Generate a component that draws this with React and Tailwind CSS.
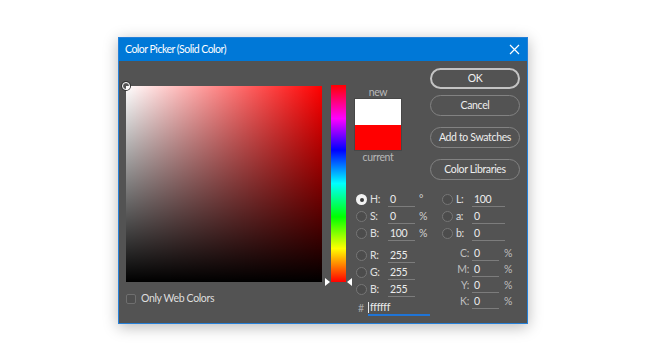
import React from 'react'

const font = { fontFamily: 'Lato, "Noto Sans", sans-serif' }

const Radio = ({ checked }) => (
    <span
        className={
            checked
                ? 'w-[11px] h-[11px] rounded-full bg-[#f2f2f2] flex items-center justify-center shrink-0'
                : 'w-[11px] h-[11px] rounded-full border border-[#767676] bg-[#4c4c4c] shrink-0'
        }
    >
        {checked && <span className="w-[4px] h-[4px] rounded-full bg-[#3a3a3a]" />}
    </span>
)

const Field = ({ value, w = 'w-[27px]' }) => (
    <div className={`${w} h-[14px] border-b border-[#7c7c7c] text-[#ececec] pl-[2px] leading-[13px]`}>
        {value}
    </div>
)

const RadioRow = ({ label, value, unit, checked }) => (
    <div className="h-[17px] flex items-center">
        <Radio checked={checked} />
        <span className="ml-[3px] w-[18px] text-[#e0e0e0]">{label}</span>
        <Field value={value} />
        <span className="ml-[4px] text-[#d2d2d2]">{unit}</span>
    </div>
)

const LabRow = ({ label, value }) => (
    <div className="h-[17px] flex items-center">
        <Radio />
        <span className="ml-[3px] w-[16px] text-[#e0e0e0]">{label}</span>
        <Field value={value} w="w-[33px]" />
    </div>
)

const CmykRow = ({ label, value }) => (
    <div className="h-[16px] flex items-center">
        <span className="w-[30px] pr-[3px] text-right text-[#bfbfbf]">{label}</span>
        <Field value={value} />
        <span className="ml-[5px] text-[#bfbfbf]">%</span>
    </div>
)

const Button = ({ children, primary }) => (
    <button
        className={
            primary
                ? 'w-[90px] h-[21px] rounded-full border-2 border-[#c4c4c4] text-[#f2f2f2] flex items-center justify-center'
                : 'w-[90px] h-[21px] rounded-full border border-[#828282] text-[#eeeeee] flex items-center justify-center'
        }
    >
        {children}
    </button>
)

export default function App() {
    return (
        <div className="w-[650px] h-[362px] bg-white overflow-hidden" style={font}>
            <div className="ml-[118px] mt-[37px] w-[410px] h-[287px] border border-[#2580d8] bg-[#535353] shadow-[0_3px_14px_rgba(0,0,0,0.28)] text-[10.5px] tracking-[-0.35px]">
                {/* title bar */}
                <div className="h-[23px] bg-[#0078d7] flex items-center justify-between pl-[6px] pr-[7px] text-white text-[10.5px] tracking-[-0.5px]">
                    <span>Color Picker (Solid Color)</span>
                    <svg width="11" height="11" viewBox="0 0 11 11">
                        <path d="M1 1 L10 10 M10 1 L1 10" stroke="white" strokeWidth="1.2" />
                    </svg>
                </div>

                <div className="flex pl-[7px]">
                    {/* colour field */}
                    <div className="mt-[25px]">
                        <div className="relative w-[196px] h-[196px] bg-[#ff0000]">
                            <div className="absolute inset-0 bg-linear-to-r from-white to-transparent" />
                            <div className="absolute inset-0 bg-linear-to-b from-transparent to-black" />
                            <span className="absolute -left-[4px] -top-[4px] w-[8px] h-[8px] rounded-full border border-white ring-1 ring-[#333]" />
                        </div>
                        <div className="mt-[9px] flex items-center">
                            <span className="w-[10px] h-[10px] rounded-[2px] border border-[#6f6f6f] bg-[#4e4e4e]" />
                            <span className="ml-[5px] text-[#dedede]">Only Web Colors</span>
                        </div>
                    </div>

                    {/* hue slider */}
                    <div className="relative ml-[3px] mt-[24px] w-[27px] h-[197px]">
                        <div className="ml-[6px] w-[15px] h-[197px] bg-[linear-gradient(to_bottom,#ff0000,#ff00ff_17%,#0000ff_33%,#00ffff_50%,#00ff00_67%,#ffff00_83%,#ff0000)]" />
                        <span className="absolute left-0 -bottom-[4px] w-0 h-0 border-y-[4px] border-y-transparent border-l-[5px] border-l-white" />
                        <span className="absolute right-0 -bottom-[4px] w-0 h-0 border-y-[4px] border-y-transparent border-r-[5px] border-r-white" />
                    </div>

                    {/* right side */}
                    <div className="ml-[2px]">
                        <div className="flex items-start">
                            <div className="mt-[25px] w-[48px] flex flex-col items-center">
                                <span className="h-[12px] leading-[12px] text-[#b8b8b8]">new</span>
                                <div className="w-[48px] h-[53px] border border-[#474747]">
                                    <div className="h-[26px] bg-white" />
                                    <div className="h-[25px] bg-[#ff0000]" />
                                </div>
                                <span className="h-[13px] leading-[13px] text-[#b8b8b8]">current</span>
                            </div>
                            <div className="ml-[28px] mt-[7px] flex flex-col">
                                <Button primary>OK</Button>
                                <div className="mt-[6px]"><Button>Cancel</Button></div>
                                <div className="mt-[11px]"><Button>Add to Swatches</Button></div>
                                <div className="mt-[11px]"><Button>Color Libraries</Button></div>
                            </div>
                        </div>

                        <div className="mt-[11px] pl-[2px] flex">
                            <div className="w-[86px]">
                                <RadioRow label="H:" value="0" unit="°" checked />
                                <RadioRow label="S:" value="0" unit="%" />
                                <RadioRow label="B:" value="100" unit="%" />
                                <div className="mt-[5px]">
                                    <RadioRow label="R:" value="255" />
                                    <RadioRow label="G:" value="255" />
                                    <RadioRow label="B:" value="255" />
                                </div>
                                <div className="mt-[2px] h-[17px] flex items-center pl-[2px]">
                                    <span className="w-[6px] text-[#a8a8a8]">#</span>
                                    <div className="ml-[4px] w-[62px] h-[15px] border-b-2 border-[#1f74d6] flex items-center text-[#ececec]">
                                        <span className="w-px h-[11px] bg-[#e8e8e8] mr-px" />
                                        ffffff
                                    </div>
                                </div>
                            </div>
                            <div>
                                <LabRow label="L:" value="100" />
                                <LabRow label="a:" value="0" />
                                <LabRow label="b:" value="0" />
                                <div className="mt-[4px]">
                                    <CmykRow label="C:" value="0" />
                                    <CmykRow label="M:" value="0" />
                                    <CmykRow label="Y:" value="0" />
                                    <CmykRow label="K:" value="0" />
                                </div>
                            </div>
                        </div>
                    </div>
                </div>
            </div>
        </div>
    )
}
